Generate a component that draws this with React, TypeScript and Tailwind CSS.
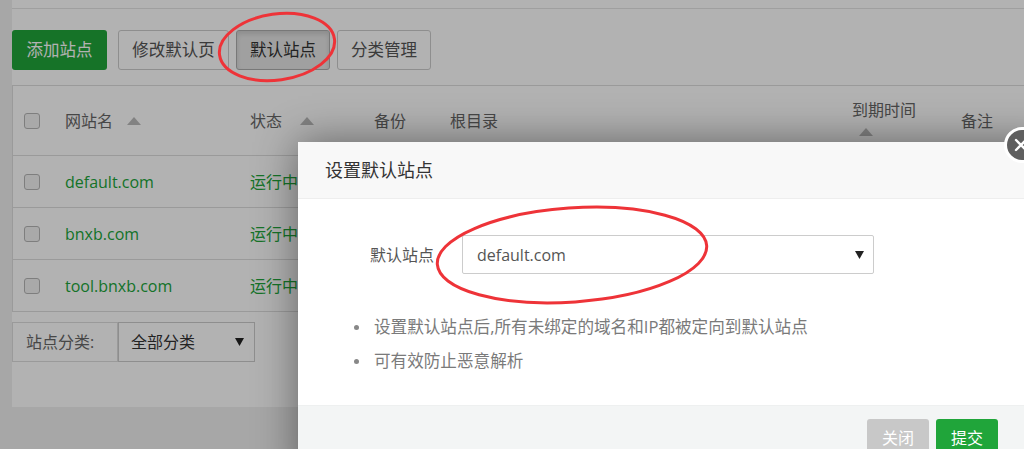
import React from 'react';

const font = { fontFamily: '"Open Sans", "Noto Sans CJK SC", sans-serif' };

const SortUp = ({ className = '' }: { className?: string }) => (
  <svg width="14" height="8" viewBox="0 0 14 8" className={className}>
    <polygon points="7,0 14,8 0,8" fill="#bbbbbb" />
  </svg>
);

const Check = () => (
  <span className="block w-[16px] h-[16px] rounded-[3px] border border-[#b5b5b5] bg-[#f2f2f2]" />
);

const rows = ['default.com', 'bnxb.com', 'tool.bnxb.com'];

const App: React.FC = () => {
  return (
    <div className="relative w-[1024px] h-[449px] overflow-hidden bg-[#f0f0f0] text-[#666]" style={font}>
      {/* page beneath */}
      <div className="ml-[12px] h-[407px] bg-white flex flex-col">
        <div className="h-[9px] border-b border-[#e4e4e4]" />
        <div className="flex gap-[7px] pt-[21px]">
          <button className="h-[40px] w-[95px] rounded-[3px] bg-[#20a53a] text-white text-[16.5px]">添加站点</button>
          <button className="h-[40px] w-[111px] ml-[4px] rounded-[3px] border border-[#ccc] bg-white text-[#555] text-[16.5px]">修改默认页</button>
          <button className="h-[40px] w-[94px] rounded-[3px] border border-[#adadad] bg-[#e6e6e6] text-[#333] text-[16.5px] shadow-[inset_0_3px_5px_rgba(0,0,0,0.125)]">默认站点</button>
          <button className="h-[40px] w-[94px] rounded-[3px] border border-[#ccc] bg-white text-[#555] text-[16.5px]">分类管理</button>
        </div>
        <div className="mt-[15px] border-l border-t border-[#ddd]">
          <div className="grid grid-cols-[52px_185px_124px_76px_402px_109px_1fr] h-[70px] items-center border-b border-[#ddd] text-[16px] text-[#666]">
            <div className="pl-[11px]"><Check /></div>
            <div className="flex items-center gap-[14px]">网站名<SortUp /></div>
            <div className="flex items-center gap-[18px]">状态<SortUp /></div>
            <div>备份</div>
            <div>根目录</div>
            <div className="flex flex-col items-start -mt-[8px]">
              <span>到期时间</span>
              <SortUp className="ml-[7px] mt-[6px]" />
            </div>
            <div>备注</div>
          </div>
          {rows.map((r) => (
            <div key={r} className="grid grid-cols-[52px_185px_124px_1fr] h-[52px] items-center border-b border-[#ddd] text-[16px]">
              <div className="pl-[11px]"><Check /></div>
              <div className="text-[#20a53a]">{r}</div>
              <div className="text-[#20a53a]">运行中</div>
              <div />
            </div>
          ))}
        </div>
        <div className="mt-[10px] flex h-[40px] text-[16px]">
          <div className="w-[106px] border border-[#ddd] flex items-center pl-[13px] text-[#666]">站点分类:</div>
          <div className="w-[137px] border border-[#ccc] flex items-center justify-between pl-[12px] pr-[10px] text-[#333]">
            <span>全部分类</span>
            <svg width="9" height="8" viewBox="0 0 9 8"><polygon points="0,0 9,0 4.5,8" fill="#222" /></svg>
          </div>
        </div>
      </div>

      {/* overlay */}
      <div className="absolute inset-0 bg-black/30" />

      {/* modal */}
      <div className="absolute left-[298px] top-[142px] w-[760px] h-[340px] bg-white shadow-[0_0_40px_rgba(0,0,0,0.45)]">
        <div className="h-[57px] bg-[#f8f8f8] border-b border-[#eee] flex items-center pl-[27px] text-[18px] text-[#333]">设置默认站点</div>
        <div className="flex items-center pt-[36px]">
          <div className="w-[138px] text-right pr-[2px] text-[16px] text-[#555]">默认站点</div>
          <div className="ml-[26px] w-[412px] h-[39px] border border-[#ccc] rounded-[2px] flex items-center justify-between pl-[14px] pr-[9px] text-[16px] text-[#555]">
            <span>default.com</span>
            <svg width="9" height="8" viewBox="0 0 9 8"><polygon points="0,0 9,0 4.5,8" fill="#222" /></svg>
          </div>
        </div>
        <ul className="mt-[41px] pl-[56px] text-[16.6px] text-[#7a7a7a] flex flex-col gap-[9px]">
          <li className="flex items-center gap-[15px]"><span className="w-[5px] h-[5px] rounded-full bg-[#888]" />设置默认站点后,所有未绑定的域名和IP都被定向到默认站点</li>
          <li className="flex items-center gap-[15px]"><span className="w-[5px] h-[5px] rounded-full bg-[#888]" />可有效防止恶意解析</li>
        </ul>
        <div className="absolute left-0 right-0 top-[263px] bottom-0 bg-[#f3f5f5] border-t border-[#eef0f0]">
          <div className="flex gap-[7px] pl-[569px] pt-[13px]">
            <button className="w-[62px] h-[38px] rounded-[3px] bg-[#c8c8c8] text-white text-[16px]">关闭</button>
            <button className="w-[62px] h-[38px] rounded-[3px] bg-[#20a53a] text-white text-[16px]">提交</button>
          </div>
        </div>
      </div>

      {/* modal close */}
      <div className="absolute left-[1004px] top-[127px] w-[36px] h-[36px] rounded-full bg-[#5f5f5f] border-[3px] border-white flex items-center justify-start pl-[7px]">
        <svg width="14" height="14" viewBox="0 0 14 14"><path d="M2 2 L12 12 M12 2 L2 12" stroke="#fff" strokeWidth="2.4" strokeLinecap="round" /></svg>
      </div>

      {/* red annotation ellipses */}
      <svg className="absolute left-0 top-0 pointer-events-none" width="1024" height="449">
        <ellipse cx="277" cy="47" rx="58" ry="33" transform="rotate(-8 277 47)" fill="none" stroke="#ee3338" strokeWidth="3" />
        <ellipse cx="572" cy="255" rx="135" ry="47" transform="rotate(-4 572 255)" fill="none" stroke="#ee3338" strokeWidth="3" />
      </svg>
    </div>
  );
};

export default App;
